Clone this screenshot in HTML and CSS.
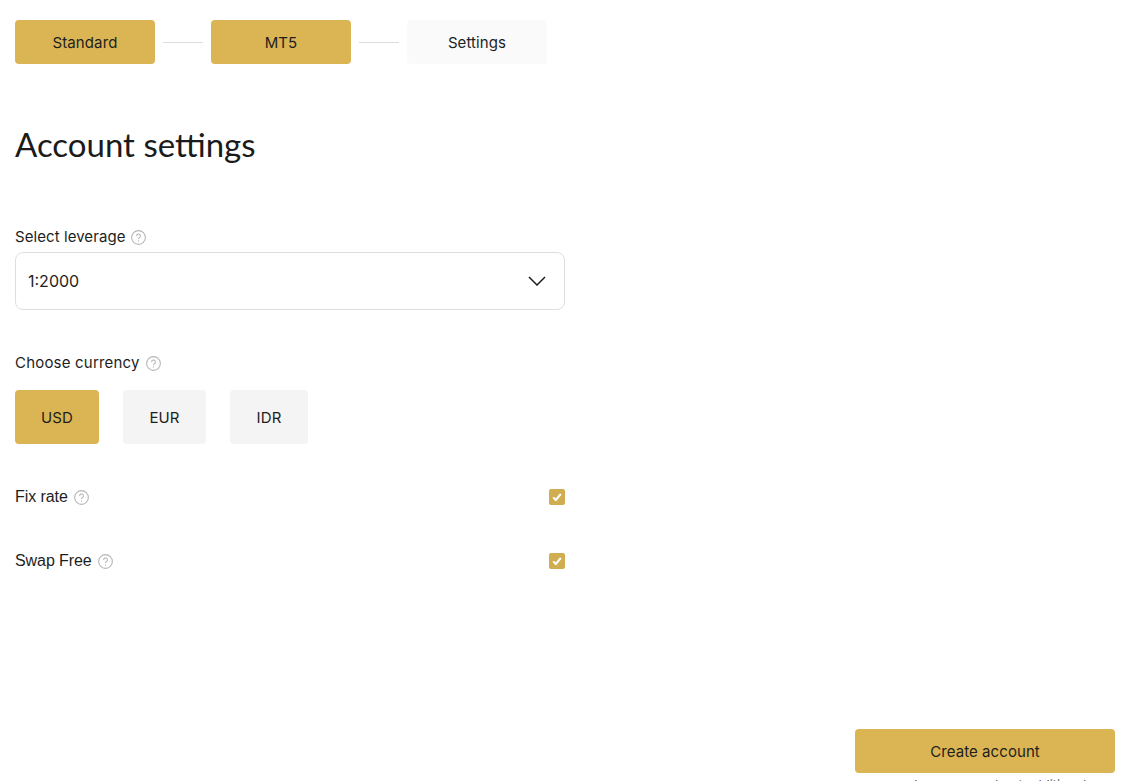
FILE: index.html
```html
<!DOCTYPE html>
<html lang="en">
<head>
<meta charset="utf-8">
<title>Account settings</title>
<link rel="stylesheet" href="styles.css">
</head>
<body>
<div class="page">
  <nav class="steps">
    <div class="step step-done">Standard</div>
    <span class="step-line"></span>
    <div class="step step-done">MT5</div>
    <span class="step-line"></span>
    <div class="step step-current">Settings</div>
  </nav>
  <h1 class="title">Account settings</h1>
  <form class="form">
    <div class="label-row leverage-label">
      <span>Select leverage</span>
      <svg class="help" viewBox="0 0 14 14"><circle cx="7" cy="7" r="6.4"/><path d="M5.2 5.5a1.8 1.8 0 1 1 2.7 1.6c-.6.35-.9.7-.9 1.4"/><circle class="dot" cx="7" cy="10.2" r=".6"/></svg>
    </div>
    <div class="select">
      <span>1:2000</span>
      <svg class="chevron" viewBox="0 0 18 10"><path d="M1 1l8 8 8-8"/></svg>
    </div>
    <div class="label-row currency-label">
      <span>Choose currency</span>
      <svg class="help" viewBox="0 0 14 14"><circle cx="7" cy="7" r="6.4"/><path d="M5.2 5.5a1.8 1.8 0 1 1 2.7 1.6c-.6.35-.9.7-.9 1.4"/><circle class="dot" cx="7" cy="10.2" r=".6"/></svg>
    </div>
    <div class="currencies">
      <div class="currency currency-active usd">USD</div>
      <div class="currency eur">EUR</div>
      <div class="currency idr">IDR</div>
    </div>
    <div class="check-row fix-row">
      <div class="label-row label-plain">
        <span>Fix rate</span>
        <svg class="help" viewBox="0 0 14 14"><circle cx="7" cy="7" r="6.4"/><path d="M5.2 5.5a1.8 1.8 0 1 1 2.7 1.6c-.6.35-.9.7-.9 1.4"/><circle class="dot" cx="7" cy="10.2" r=".6"/></svg>
      </div>
      <span class="checkbox"><svg viewBox="0 0 16 16"><path d="M4.2 8.4l2.6 2.6 5-6"/></svg></span>
    </div>
    <div class="check-row swap-row">
      <div class="label-row label-plain">
        <span>Swap Free</span>
        <svg class="help" viewBox="0 0 14 14"><circle cx="7" cy="7" r="6.4"/><path d="M5.2 5.5a1.8 1.8 0 1 1 2.7 1.6c-.6.35-.9.7-.9 1.4"/><circle class="dot" cx="7" cy="10.2" r=".6"/></svg>
      </div>
      <span class="checkbox"><svg viewBox="0 0 16 16"><path d="M4.2 8.4l2.6 2.6 5-6"/></svg></span>
    </div>
  </form>
  <div class="actions">
    <div class="create">Create account</div>
    <p class="note">Learn more about additional</p>
  </div>
</div>
</body>
</html>
```
FILE: styles.css
```css
* { box-sizing: border-box; }
html, body { margin: 0; height: 100%; overflow: hidden; background: #fff; }
body { font-family: "Inter", "Noto Sans", sans-serif; color: #1e1e1e; font-size: 15px; }
.page { height: 781px; padding: 20px 16px 0 15px; display: flex; flex-direction: column; }
.steps { display: flex; align-items: center; gap: 8px; }
.step { width: 140px; height: 44px; border-radius: 4px; display: flex; align-items: center; justify-content: center; font-size: 15px; letter-spacing: .1px; }
.step-done { background: #dbb553; }
.step-current { background: #fafafa; }
.step-line { width: 40px; height: 1px; background: #dcdcdc; }
.title { margin: 58px 0 0; font-family: "Lato", sans-serif; font-size: 33px; line-height: 44px; font-weight: 400; color: #1b1b1b; }
.form { width: 550px; margin-top: 61px; }
.label-row { display: flex; align-items: center; gap: 6px; font-size: 15px; line-height: 20px; }
.leverage-label { letter-spacing: .07px; }
.currency-label { letter-spacing: .2px; }
.label-plain { font-family: "Liberation Sans", sans-serif; font-size: 16px; letter-spacing: -.08px; }
.help { width: 15px; height: 15px; fill: none; stroke: #b5b5b5; stroke-width: 1; }
.help .dot { fill: #b5b5b5; stroke: none; }
.select { margin-top: 5px; height: 58px; border: 1px solid #dedede; border-radius: 8px; padding: 0 18px 0 12px; display: flex; align-items: center; justify-content: space-between; font-size: 16px; }
.chevron { width: 18px; height: 10px; fill: none; stroke: #1e1e1e; stroke-width: 1.5; }
.currency-label { margin-top: 43px; }
.currencies { display: flex; gap: 24px; margin-top: 17px; }
.currency { height: 54px; border-radius: 4px; background: #f4f4f4; display: flex; align-items: center; justify-content: center; font-size: 15px; letter-spacing: .1px; }
.currency-active { background: #dbb553; }
.usd { width: 84px; }
.eur { width: 83px; }
.idr { width: 78px; }
.check-row { display: flex; align-items: center; justify-content: space-between; height: 20px; }
.fix-row { margin-top: 43px; }
.swap-row { margin-top: 44px; }
.checkbox { width: 16px; height: 16px; border-radius: 2px; background: #d1ad52; display: flex; }
.checkbox svg { width: 16px; height: 16px; fill: none; stroke: #fff; stroke-width: 2; }
.actions { margin-top: auto; align-self: flex-end; width: 260px; height: 52px; overflow: visible; }
.create { height: 44px; background: #dbb553; border-radius: 4px; display: flex; align-items: center; justify-content: center; font-size: 15px; letter-spacing: .08px; }
.note { margin: 3px 0 0; padding-left: 30px; text-align: center; color: #555; font-size: 13px; line-height: 18px; white-space: nowrap; }
```
